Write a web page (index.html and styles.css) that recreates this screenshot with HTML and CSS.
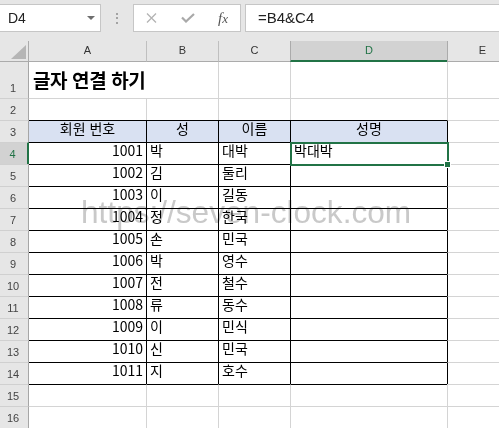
FILE: index.html
```html
<!DOCTYPE html>
<html lang="ko">
<head>
<meta charset="utf-8">
<title>글자 연결 하기</title>
<link rel="stylesheet" href="styles.css">
</head>
<body>
<div class="app">
  <div class="toolbar">
    <div class="namebox">
      <span>D4</span>
      <svg class="dd" width="8" height="4" viewBox="0 0 8 4"><path d="M0 0H8L4 4Z" fill="#6e6e6e"/></svg>
    </div>
    <div class="grip"><i></i><i></i><i></i></div>
    <div class="fbtns">
      <svg class="ic-x" width="11" height="10" viewBox="0 0 11 10"><path d="M1 0.5L10 9.5M10 0.5L1 9.5" stroke="#b3b3b3" stroke-width="1.3" fill="none"/></svg>
      <svg class="ic-ok" width="14" height="10" viewBox="0 0 14 10"><path d="M1 4.5L5 8.5L13 1" stroke="#a9a9a9" stroke-width="2.2" fill="none"/></svg>
      <span class="fx"><i>f</i><i class="x">x</i></span>
    </div>
    <div class="finput">=B4&amp;C4</div>
  </div>

  <div class="sheet">
    <div class="corner"><svg width="15" height="14" viewBox="0 0 15 14"><path d="M15 0V14H0Z" fill="#b5b5b5"/></svg></div>
    <div class="ch">A</div><div class="ch">B</div><div class="ch">C</div><div class="ch ch-sel">D</div><div class="ch">E</div>

    <div class="rh rh-first">1</div>
    <div class="c a r1 title">글자 연결 하기</div><div class="c r1 nogrid"></div><div class="c r1"></div><div class="c r1"></div><div class="c r1"></div>

    <div class="rh">2</div>
    <div class="c a"></div><div class="c"></div><div class="c"></div><div class="c"></div><div class="c"></div>

    <div class="rh">3</div>
    <div class="c a t hd">회원 번호</div><div class="c t hd">성</div><div class="c t hd">이름</div><div class="c t hd">성명</div><div class="c tr"></div>

    <div class="rh rh-sel">4</div>
    <div class="c a t num">1001</div><div class="c t txt">박</div><div class="c t txt">대박</div><div class="c t txt active">박대박<span class="sel"></span><span class="handle"></span></div><div class="c tr"></div>

    <div class="rh">5</div>
    <div class="c a t num">1002</div><div class="c t txt">김</div><div class="c t txt">둘리</div><div class="c t"></div><div class="c tr"></div>

    <div class="rh">6</div>
    <div class="c a t num">1003</div><div class="c t txt">이</div><div class="c t txt">길동</div><div class="c t"></div><div class="c tr"></div>

    <div class="rh">7</div>
    <div class="c a t num">1004</div><div class="c t txt">정</div><div class="c t txt">한국</div><div class="c t"></div><div class="c tr"></div>

    <div class="rh">8</div>
    <div class="c a t num">1005</div><div class="c t txt">손</div><div class="c t txt">민국</div><div class="c t"></div><div class="c tr"></div>

    <div class="rh">9</div>
    <div class="c a t num">1006</div><div class="c t txt">박</div><div class="c t txt">영수</div><div class="c t"></div><div class="c tr"></div>

    <div class="rh">10</div>
    <div class="c a t num">1007</div><div class="c t txt">전</div><div class="c t txt">철수</div><div class="c t"></div><div class="c tr"></div>

    <div class="rh">11</div>
    <div class="c a t num">1008</div><div class="c t txt">류</div><div class="c t txt">동수</div><div class="c t"></div><div class="c tr"></div>

    <div class="rh">12</div>
    <div class="c a t num">1009</div><div class="c t txt">이</div><div class="c t txt">민식</div><div class="c t"></div><div class="c tr"></div>

    <div class="rh">13</div>
    <div class="c a t num">1010</div><div class="c t txt">신</div><div class="c t txt">민국</div><div class="c t"></div><div class="c tr"></div>

    <div class="rh">14</div>
    <div class="c a t num">1011</div><div class="c t txt">지</div><div class="c t txt">호수</div><div class="c t"></div><div class="c tr"></div>

    <div class="rh">15</div>
    <div class="c a tb"></div><div class="c tb"></div><div class="c tb"></div><div class="c tb"></div><div class="c"></div>

    <div class="rh">16</div>
    <div class="c a"></div><div class="c"></div><div class="c"></div><div class="c"></div><div class="c"></div>
  </div>

  <div class="watermark">https://seven-clock.com</div>
</div>
</body>
</html>
```

FILE: styles.css
```css
* { box-sizing: border-box; }

html, body {
  margin: 0;
  background: #ffffff;
}

body {
  font-family: "Noto Sans CJK KR", "Noto Sans", sans-serif;
  color: #000;
}

.app {
  position: relative;
  width: 499px;
  height: 429px;
  overflow: hidden;
  background: #ffffff;
}

/* ---------- formula bar ---------- */
.toolbar {
  height: 41px;
  background: #e6e6e6;
  display: flex;
  align-items: flex-start;
  padding-top: 4px;
}

.namebox {
  width: 102px;
  margin-left: -1px;
  height: 28px;
  background: #fff;
  border: 1px solid #c6c6c6;
  display: flex;
  align-items: center;
  justify-content: space-between;
  padding-left: 8px;
  padding-right: 5px;
  font: 14px "Liberation Sans", Arial, sans-serif;
  color: #222;
}

.grip {
  width: 32px;
  height: 28px;
  display: flex;
  flex-direction: column;
  align-items: center;
  justify-content: center;
  gap: 2.5px;
}

.grip i {
  display: block;
  width: 2px;
  height: 2px;
  background: #a3a3a3;
}

.fbtns {
  width: 108px;
  height: 28px;
  background: #fff;
  border: 1px solid #c6c6c6;
  display: flex;
  align-items: center;
  padding-left: 12px;
}

.ic-ok { margin-left: 24px; }

.fx {
  margin-left: 23px;
  font-family: "Liberation Serif", "DejaVu Serif", serif;
  font-size: 15px;
  color: #555;
  line-height: 1;
}

.fx .x {
  font-size: 13px;
}

.finput {
  flex: 1;
  margin-left: 4px;
  height: 28px;
  background: #fff;
  border: 1px solid #c6c6c6;
  border-right: none;
  padding-left: 12px;
  font: 15px "Liberation Sans", Arial, sans-serif;
  line-height: 26px;
  color: #222;
}

/* ---------- sheet grid ---------- */
.sheet {
  display: grid;
  grid-template-columns: 29px 117px 72px 72px 157px 70px;
  grid-template-rows: 21px 36px repeat(15, 22px);
  width: 517px;
}

.corner {
  background: #e6e6e6;
  border-bottom: 1px solid #ababab;
  border-right: 1px solid #ababab;
  display: flex;
  align-items: flex-end;
  justify-content: flex-end;
  padding: 0 2px 2px 0;
}

.corner svg { display: block; }

.ch {
  background: #e6e6e6;
  border-left: 1px solid #bfbfbf;
  border-bottom: 1px solid #ababab;
  text-align: center;
  font: 11px "Liberation Sans", Arial, sans-serif;
  line-height: 19px;
  color: #333;
}

.ch:nth-child(2) { border-left: none; }

.ch-sel {
  background: #d2d2d2;
  border-left-color: #ababab;
  border-bottom: 2px solid #217346;
  color: #217346;
}

.ch-sel + .ch { border-left-color: #ababab; }

.rh {
  background: #e6e6e6;
  border-top: 1px solid #d0d0d0;
  border-right: 1px solid #a6a6a6;
  display: flex;
  align-items: flex-end;
  justify-content: center;
  padding-right: 2px;
  padding-bottom: 3px;
  font: 11px "Liberation Sans", Arial, sans-serif;
  line-height: 13px;
  color: #444;
}

.rh-first { border-top: none; }

.rh-sel {
  background: #d2d2d2;
  border-right: 2px solid #217346;
  color: #217346;
}

.c {
  background: #fff;
  border-left: 1px solid #d4d4d4;
  border-top: 1px solid #d4d4d4;
  font-size: 14px;
  line-height: 11px;
  padding-top: 2px;
  white-space: nowrap;
  color: #000;
}

.r1 { border-top: none; }
.nogrid { border-left: none; }

.t {
  border-left-color: #000;
  border-top-color: #000;
}

.tr { border-left-color: #000; }
.tb { border-top-color: #000; }

.a { border-left: none; }

.num {
  text-align: right;
  padding-right: 3px;
}

.txt { padding-left: 3px; }

.hd {
  background: #d9e1f2;
  text-align: center;
}

.title {
  font-size: 19px;
  font-weight: bold;
  line-height: 19px;
  letter-spacing: -0.4px;
  padding-top: 8px;
  padding-left: 4px;
}

.active { position: relative; }

.sel {
  position: absolute;
  left: -1px;
  top: -1px;
  right: -2px;
  bottom: -2px;
  border: 2px solid #217346;
}

.handle {
  position: absolute;
  right: -4px;
  bottom: -4px;
  width: 7px;
  height: 7px;
  background: #217346;
  border: 1px solid #fff;
}

/* ---------- watermark ---------- */
.watermark {
  position: absolute;
  left: 81px;
  top: 196px;
  font: 31.6px "Liberation Sans", Arial, sans-serif;
  line-height: 32px;
  color: #c9c9c9;
  mix-blend-mode: multiply;
  white-space: nowrap;
}
```
